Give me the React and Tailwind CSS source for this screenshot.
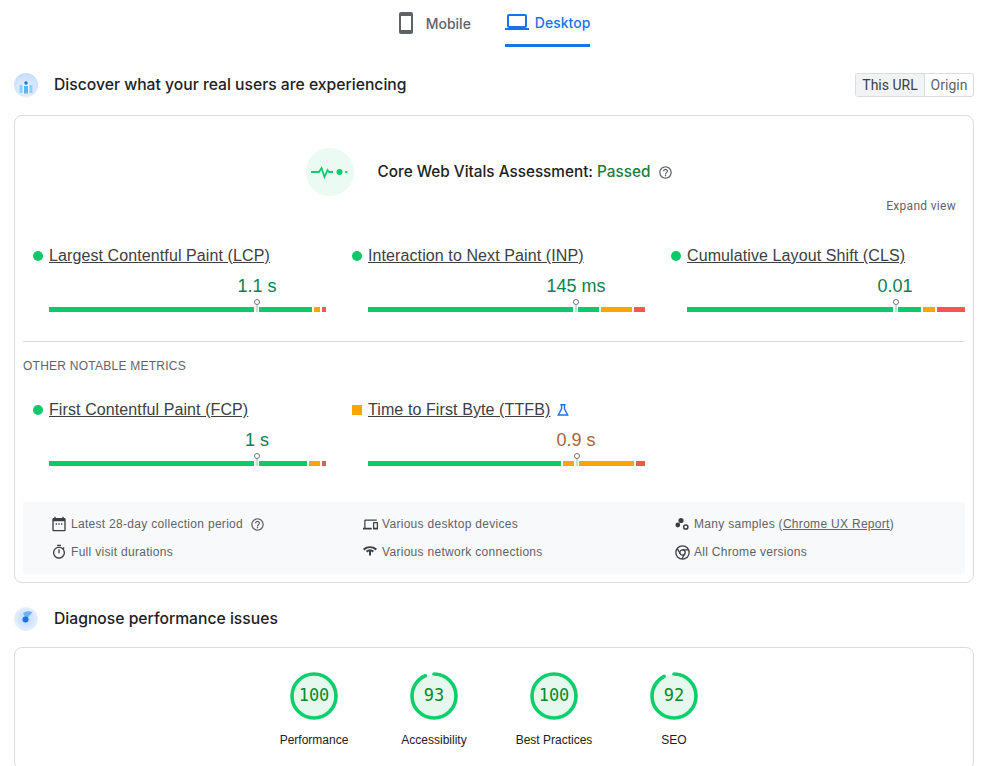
const HELP =
  "M11 18h2v-2h-2v2zm1-16C6.48 2 2 6.48 2 12s4.48 10 10 10 10-4.48 10-10S17.52 2 12 2zm0 18c-4.41 0-8-3.59-8-8s3.59-8 8-8 8 3.59 8 8-3.59 8-8 8zm0-14c-2.21 0-4 1.79-4 4h2c0-1.1.9-2 2-2s2 .9 2 2c0 2-3 1.75-3 5h2c0-2.25 3-2.5 3-5 0-2.21-1.79-4-4-4z";

const coreMetrics = [
  {
    title: "Largest Contentful Paint (LCP)",
    value: "1.1 s",
    marker: "left-[205px]",
    bars: ["w-[263px] bg-[#10c76a]", "w-[6px] bg-[#ffa400]", "w-[4px] bg-[#f4584a]"],
  },
  {
    title: "Interaction to Next Paint (INP)",
    value: "145 ms",
    marker: "left-[205px]",
    bars: ["w-[231px] bg-[#10c76a]", "w-[31px] bg-[#ffa400]", "w-[11px] bg-[#f4584a]"],
  },
  {
    title: "Cumulative Layout Shift (CLS)",
    value: "0.01",
    marker: "left-[206px]",
    bars: ["w-[234px] bg-[#10c76a]", "w-[12px] bg-[#ffa400]", "w-[28px] bg-[#f4584a]"],
  },
];

const otherMetrics = [
  {
    title: "First Contentful Paint (FCP)",
    value: "1 s",
    marker: "left-[205px]",
    bars: ["w-[258px] bg-[#10c76a]", "w-[11px] bg-[#ffa400]", "w-[4px] bg-[#f4584a]"],
  },
  {
    title: "Time to First Byte (TTFB)",
    value: "0.9 s",
    marker: "left-[206px]",
    average: true,
    bars: ["w-[193px] bg-[#10c76a]", "w-[71px] bg-[#ffa400]", "w-[9px] bg-[#f4584a]"],
  },
];

const scores = [
  { label: "Performance", score: 100 },
  { label: "Accessibility", score: 93 },
  { label: "Best Practices", score: 100 },
  { label: "SEO", score: 92 },
];

function Icon({ d, className }) {
  return (
    <svg viewBox="0 0 24 24" fill="currentColor" className={className}>
      <path d={d} />
    </svg>
  );
}

function UsersIcon() {
  return (
    <svg viewBox="0 0 24 24" className="h-6 w-6 shrink-0">
      <defs>
        <radialGradient id="usersBg" cx="50%" cy="70%" r="70%">
          <stop offset="0%" stopColor="#eef5fe" />
          <stop offset="100%" stopColor="#c3dcfb" />
        </radialGradient>
      </defs>
      <circle cx="12" cy="12" r="12" fill="url(#usersBg)" />
      <circle cx="12" cy="10" r="1.7" fill="#1a73e8" />
      <rect x="5.5" y="12" width="3" height="8" fill="#8bd0f8" />
      <rect x="10" y="13" width="4" height="7.5" fill="#5cb6f3" />
      <rect x="15.5" y="12" width="3" height="8" fill="#8bd0f8" />
    </svg>
  );
}

function GaugeIcon() {
  return (
    <svg viewBox="0 0 24 24" className="h-6 w-6 shrink-0">
      <defs>
        <radialGradient id="gaugeBg">
          <stop offset="0%" stopColor="#bcd6fb" />
          <stop offset="100%" stopColor="#e8f0fe" />
        </radialGradient>
      </defs>
      <circle cx="12" cy="12" r="12" fill="url(#gaugeBg)" />
      <path d="M12 12L18.5 5.5A9 9 0 0 0 9 6Z" fill="#6fb1f5" />
      <circle cx="11.5" cy="12.5" r="3" fill="#1a73e8" />
    </svg>
  );
}

function SectionTitle({ icon, children }) {
  return (
    <div className="flex items-center gap-4">
      {icon}
      <h2 className="font-['Inter',sans-serif] text-[15.7px] font-medium text-[#212124]">{children}</h2>
    </div>
  );
}

function MetricBar({ metric }) {
  return (
    <div className="relative flex h-[5px] w-[278px] gap-[2px]">
      {metric.bars.map((bar) => (
        <div key={bar} className={`h-[5px] ${bar}`}></div>
      ))}
      <div className={`absolute -top-[4px] h-[9px] w-[5px] bg-white ${metric.marker}`}>
        <div className="mx-auto h-[9px] w-[2px] bg-[#b8e6d0]"></div>
      </div>
      <div className={`absolute -top-[8px] -ml-[0.5px] h-[6px] w-[6px] rounded-full border border-[#757575] bg-white ${metric.marker}`}></div>
    </div>
  );
}

function Metric({ metric }) {
  return (
    <div className="w-[319px] shrink-0">
      <div className="flex h-[20px] items-center">
        {metric.average ? (
          <span className="mr-[6px] h-[10px] w-[10px] bg-[#ffa400]"></span>
        ) : (
          <span className="mr-[6px] h-[10px] w-[10px] rounded-full bg-[#10c76a]"></span>
        )}
        <a className="text-[16px] leading-[20px] tracking-[0.1px] text-[#3c4043] underline">{metric.title}</a>
        {metric.average ? (
          <svg viewBox="0 0 24 24" className="ml-[6px] h-[14px] w-[14px] text-[#1a73e8]" fill="none" stroke="currentColor" strokeWidth="2.4">
            <path d="M7.5 3h9M9.5 3v7L4 20.5h16L14.5 10V3" />
          </svg>
        ) : null}
      </div>
      <div className="ml-[16px] mt-[9px]">
        <div className={`ml-[208px] w-max -translate-x-1/2 whitespace-nowrap text-[18px] leading-[22px] ${metric.average ? "text-[#a8643c]" : "text-[#0d8050]"}`}>
          {metric.value}
        </div>
        <div className="mt-[10px]">
          <MetricBar metric={metric} />
        </div>
      </div>
    </div>
  );
}

function InfoItem({ icon, children }) {
  return (
    <div className="flex h-[16px] items-center gap-[5px] whitespace-nowrap text-[12px] tracking-[0.3px] text-[#5f6368]">
      <span className="flex h-[14px] w-[14px] shrink-0 items-center justify-center text-[#3c4043]">{icon}</span>
      {children}
    </div>
  );
}

function Gauge({ label, score }) {
  const circumference = 2 * Math.PI * 22;
  return (
    <div className="flex w-[120px] flex-col items-center">
      <div className="relative h-[48px] w-[48px]">
        <svg viewBox="0 0 48 48" className="h-[48px] w-[48px] -rotate-90">
          <circle cx="24" cy="24" r="22" fill="#e6f8ee" />
          <circle
            cx="24"
            cy="24"
            r="22"
            fill="none"
            stroke="#0cce6b"
            strokeWidth="3.6"
            strokeLinecap="round"
            strokeDasharray={`${(score / 100) * circumference} ${circumference}`}
          />
        </svg>
        <div className="absolute inset-0 flex items-center justify-center font-['DejaVu_Sans_Mono',monospace] text-[17px] text-[#0a8a2a]">
          {score}
        </div>
      </div>
      <div className="mt-[11px] text-[12px] leading-[18px] text-[#212124]">{label}</div>
    </div>
  );
}

export default function App() {
  return (
    <div className="h-[766px] overflow-hidden bg-white pl-[14px] pr-[12px] font-['Liberation_Sans',Arial,sans-serif] text-[#212124]">
      <div className="flex h-[47px] justify-center gap-[34px] pr-[4px] font-['Inter',sans-serif] text-[14px] font-medium">
        <div className="flex h-[47px] items-center gap-[8px] pb-[1px] text-[#5f6368]">
          <Icon
            className="h-6 w-6"
            d="M17 1.01L7 1c-1.1 0-2 .9-2 2v18c0 1.1.9 2 2 2h10c1.1 0 2-.9 2-2V3c0-1.1-.9-1.99-2-1.99zM17 19H7V5h10v14z"
          />
          Mobile
        </div>
        <div className="flex h-[47px] items-center gap-[6px] border-b-[3px] border-[#1a73e8] pb-[1px] pt-[1px] text-[#1a73e8]">
          <Icon
            className="h-6 w-6"
            d="M20 18c1.1 0 1.99-.9 1.99-2L22 6c0-1.1-.9-2-2-2H4c-1.1 0-2 .9-2 2v10c0 1.1.9 2 2 2H0v2h24v-2h-4zM4 6h16v10H4V6z"
          />
          Desktop
        </div>
      </div>

      <div className="mt-[26px] flex h-[24px] items-center justify-between">
        <SectionTitle icon={<UsersIcon />}>Discover what your real users are experiencing</SectionTitle>
        <div className="flex h-[24px] rounded-[3px] border border-[#dadce0] font-['Roboto',sans-serif] text-[14px] text-[#5f6368]">
          <div className="flex w-[69px] items-center justify-center border-r border-[#dadce0] bg-[#f1f3f4] text-[#3c4043]">This URL</div>
          <div className="flex w-[48px] items-center justify-center">Origin</div>
        </div>
      </div>

      <div className="mt-[18px] h-[468px] rounded-[8px] border border-[#dadce0] px-[8px] pt-[32px]">
        <div className="flex h-[48px] items-center justify-center gap-[24px] pr-[9px]">
          <div className="flex h-[48px] w-[48px] items-center justify-center rounded-full bg-[#ebfaf3]">
            <svg viewBox="0 0 40 16" className="h-[16px] w-[40px] text-[#0cce6b]" fill="none" stroke="currentColor" strokeWidth="1.8">
              <path d="M1 8h8l2.5-4 3 9 3-7 1.5 2h4" />
              <circle cx="29.5" cy="8" r="3" fill="currentColor" stroke="none" />
              <path d="M35 8h2.5" />
            </svg>
          </div>
          <div className="flex items-center gap-[8px]">
            <span className="font-['Inter',sans-serif] text-[15.3px] font-[450] text-[#212124]">
              Core Web Vitals Assessment: <span className="text-[#188038]">Passed</span>
            </span>
            <Icon className="h-[15px] w-[15px] text-[#5f6368]" d={HELP} />
          </div>
        </div>
        <div className="mt-[2px] pr-[9px] text-right font-['Roboto',sans-serif] text-[12px] leading-[16px] tracking-[0.3px] text-[#5f6368]">
          Expand view
        </div>
        <div className="mt-[32px] flex pl-[10px]">
          {coreMetrics.map((metric) => (
            <Metric key={metric.title} metric={metric} />
          ))}
        </div>
        <div className="mt-[29px] border-t border-[#dadce0]"></div>
        <div className="mt-[16px] text-[12px] leading-[16px] tracking-[0.25px] text-[#5f6368]">OTHER NOTABLE METRICS</div>
        <div className="mt-[26px] flex pl-[10px]">
          {otherMetrics.map((metric) => (
            <Metric key={metric.title} metric={metric} />
          ))}
        </div>
        <div className="mt-[36px] grid h-[72px] grid-cols-[311px_312px_1fr] content-center gap-y-[12px] bg-[#f8f9fa] pl-[29px]">
          <InfoItem
            icon={
              <Icon
                className="h-[16px] w-[16px] shrink-0"
                d="M20 3h-1V1h-2v2H7V1H5v2H4c-1.1 0-2 .9-2 2v16c0 1.1.9 2 2 2h16c1.1 0 2-.9 2-2V5c0-1.1-.9-2-2-2zm0 18H4V8h16v13zM7 11h2v2H7zm4 0h2v2h-2zm4 0h2v2h-2z"
              />
            }
          >
            <span>Latest 28-day collection period</span>
            <Icon className="ml-[2px] h-[15px] w-[15px] shrink-0" d={HELP} />
          </InfoItem>
          <InfoItem
            icon={
              <Icon
                className="h-[15px] w-[15px] shrink-0"
                d="M4 6h18V4H4c-1.1 0-2 .9-2 2v11H0v3h14v-3H4V6zm19 2h-6c-.55 0-1 .45-1 1v10c0 .55.45 1 1 1h6c.55 0 1-.45 1-1V9c0-.55-.45-1-1-1zm-1 9h-4v-7h4v7z"
              />
            }
          >
            Various desktop devices
          </InfoItem>
          <InfoItem
            icon={
              <svg viewBox="0 0 14 14" className="h-[14px] w-[14px]" fill="currentColor">
                <circle cx="6" cy="3.5" r="2.6" />
                <circle cx="2.8" cy="8" r="2.4" />
                <circle cx="10.8" cy="10" r="2.1" fill="none" stroke="currentColor" strokeWidth="1.5" />
              </svg>
            }
          >
            <span>
              Many samples (<a className="underline">Chrome UX Report</a>)
            </span>
          </InfoItem>
          <InfoItem
            icon={
              <Icon
                className="h-[16px] w-[16px] shrink-0"
                d="M15 1H9v2h6V1zm-4 13h2V8h-2v6zm8.03-6.61l1.42-1.42c-.43-.51-.9-.99-1.41-1.41l-1.42 1.42C16.07 4.74 14.12 4 12 4c-4.97 0-9 4.03-9 9s4.02 9 9 9 9-4.03 9-9c0-2.12-.74-4.07-1.97-5.61zM12 20c-3.87 0-7-3.13-7-7s3.13-7 7-7 7 3.13 7 7-3.13 7-7 7z"
              />
            }
          >
            Full visit durations
          </InfoItem>
          <InfoItem
            icon={
              <svg viewBox="0 0 14 14" className="h-[14px] w-[14px] -translate-y-[1px]" fill="none" stroke="currentColor">
                <path d="M0.6 5.6C4.4 2.6 9.6 2.6 13.4 5.6" strokeWidth="2" />
                <path d="M3.6 7.6C5.6 6 8.4 6 10.4 7.6" strokeWidth="2" />
                <path d="M7 6v5.5" strokeWidth="2" />
              </svg>
            }
          >
            Various network connections
          </InfoItem>
          <InfoItem
            icon={
              <svg viewBox="0 0 14 14" className="h-[15px] w-[15px] shrink-0" fill="none" stroke="currentColor" strokeWidth="1.2">
                <circle cx="7" cy="7" r="6.2" />
                <circle cx="7" cy="7" r="2.5" />
                <path d="M7 4.5h5.6M4.8 8.2L2.2 3.4M9.2 8.2L6.4 13" />
              </svg>
            }
          >
            All Chrome versions
          </InfoItem>
        </div>
      </div>

      <div className="mt-[24px] flex h-[24px] items-center">
        <SectionTitle icon={<GaugeIcon />}>Diagnose performance issues</SectionTitle>
      </div>

      <div className="mt-[16px] rounded-[8px] border border-[#dadce0] pt-[24px] pb-[20px]">
        <div className="flex justify-center">
          {scores.map((item) => (
            <Gauge key={item.label} label={item.label} score={item.score} />
          ))}
        </div>
      </div>
    </div>
  );
}
